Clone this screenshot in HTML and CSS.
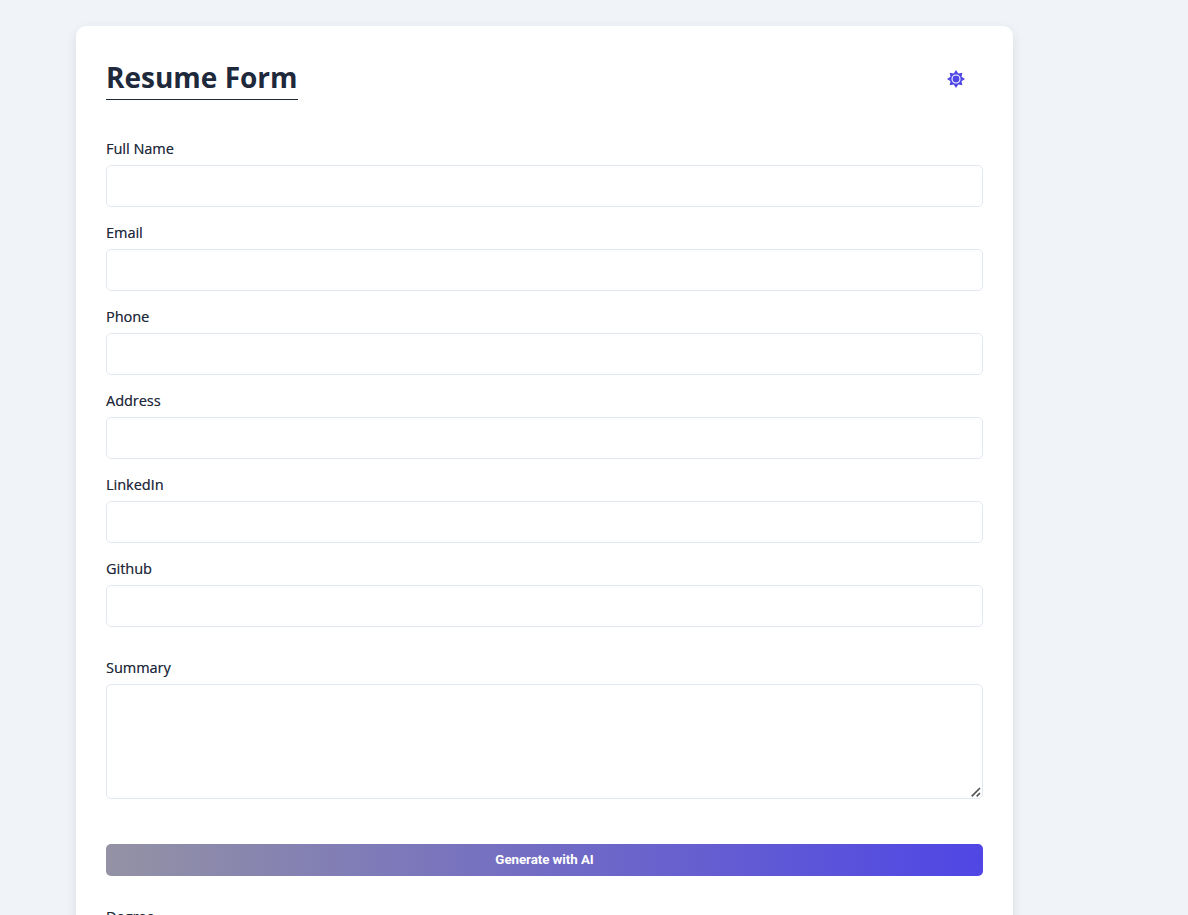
FILE: index.html
```html
<!DOCTYPE html>
<html lang="en">
<head>
<meta charset="utf-8">
<title>Resume Form</title>
<link rel="stylesheet" href="styles.css">
</head>
<body>
<main class="card">
  <header class="header">
    <h1 class="title">Resume Form</h1>
    <button class="theme" type="button" aria-label="Toggle theme">
      <svg width="18" height="18" viewBox="0 0 18 18" fill="currentColor"><path d="M9 0 11.250 3.500 15.360 2.640 14.500 6.750 18 9 14.500 11.250 15.360 15.360 11.250 14.500 9 18 6.750 14.500 2.640 15.360 3.500 11.250 0 9 3.500 6.750 2.640 2.640 6.750 3.500z"/><circle cx="9" cy="9" r="4" fill="none" stroke="#fff" stroke-width="1.100"/></svg>
    </button>
  </header>
  <form class="form">
    <label class="field"><span class="label">Full Name</span><input class="control" type="text"></label>
    <label class="field"><span class="label">Email</span><input class="control" type="text"></label>
    <label class="field"><span class="label">Phone</span><input class="control" type="text"></label>
    <label class="field"><span class="label">Address</span><input class="control" type="text"></label>
    <label class="field"><span class="label">LinkedIn</span><input class="control" type="text"></label>
    <label class="field"><span class="label">Github</span><input class="control" type="text"></label>
    <label class="field summary"><span class="label">Summary</span><textarea class="control area"></textarea><svg class="grip" width="10" height="10" viewBox="0 0 10 10"><path d="M.7 9.300 9 1M5.700 9.300 9 6" fill="none" stroke="#555" stroke-width="1.700"/></svg></label>
    <button class="generate" type="button">Generate with AI</button>
    <label class="field"><span class="label">Degree</span><input class="control" type="text"></label>
  </form>
</main>
</body>
</html>
```
FILE: styles.css
```css
* { box-sizing: border-box; }
html { height: 100%; overflow: hidden; }
body {
  margin: 0;
  height: 100%;
  overflow: hidden;
  background: #f0f4f8;
  color: #1e293b;
  font-family: "Segoe UI", "Open Sans", sans-serif;
}
.card {
  width: 937px;
  margin: 26px 0 0 76px;
  padding: 30px;
  border-radius: 10px;
  background: #fff;
  box-shadow: 0 4px 12px rgba(0, 0, 0, .1);
}
.header {
  display: flex;
  justify-content: space-between;
  align-items: flex-start;
  height: 82px;
}
.title {
  width: 192px;
  height: 44px;
  margin: 0;
  border-bottom: 1px solid #1e293b;
  font-size: 28px;
  line-height: 42px;
  font-weight: 700;
  white-space: nowrap;
}
.theme {
  display: flex;
  margin: 14px 18px 0 0;
  padding: 0;
  border: 0;
  background: none;
  color: #4f46e5;
}
.form { display: flex; flex-direction: column; }
.field { display: flex; flex-direction: column; margin-bottom: 15px; }
.label {
  height: 27px;
  font-size: 14.4px;
  line-height: 21px;
  letter-spacing: 0.03px;
  font-weight: 500;
  text-shadow: 0.3px 0 0 rgba(30, 41, 59, .6);
}
.control {
  width: 100%;
  height: 42px;
  border: 1px solid #e2e8f0;
  border-radius: 5px;
  background: #fff;
  outline: 0;
}
.area { height: 115px; resize: none; }
.summary { position: relative; margin: 15px 0 45px; }
.grip { position: absolute; right: 2px; bottom: 2px; }
.generate {
  height: 32px;
  margin-bottom: 30px;
  padding: 0 0 2px;
  border: 0;
  border-radius: 5px;
  background: linear-gradient(90deg, #9492a4, #4f46e5);
  color: #fff;
  font: 700 13.333px Roboto, Arial, sans-serif;
  letter-spacing: -0.06px;
}
```
